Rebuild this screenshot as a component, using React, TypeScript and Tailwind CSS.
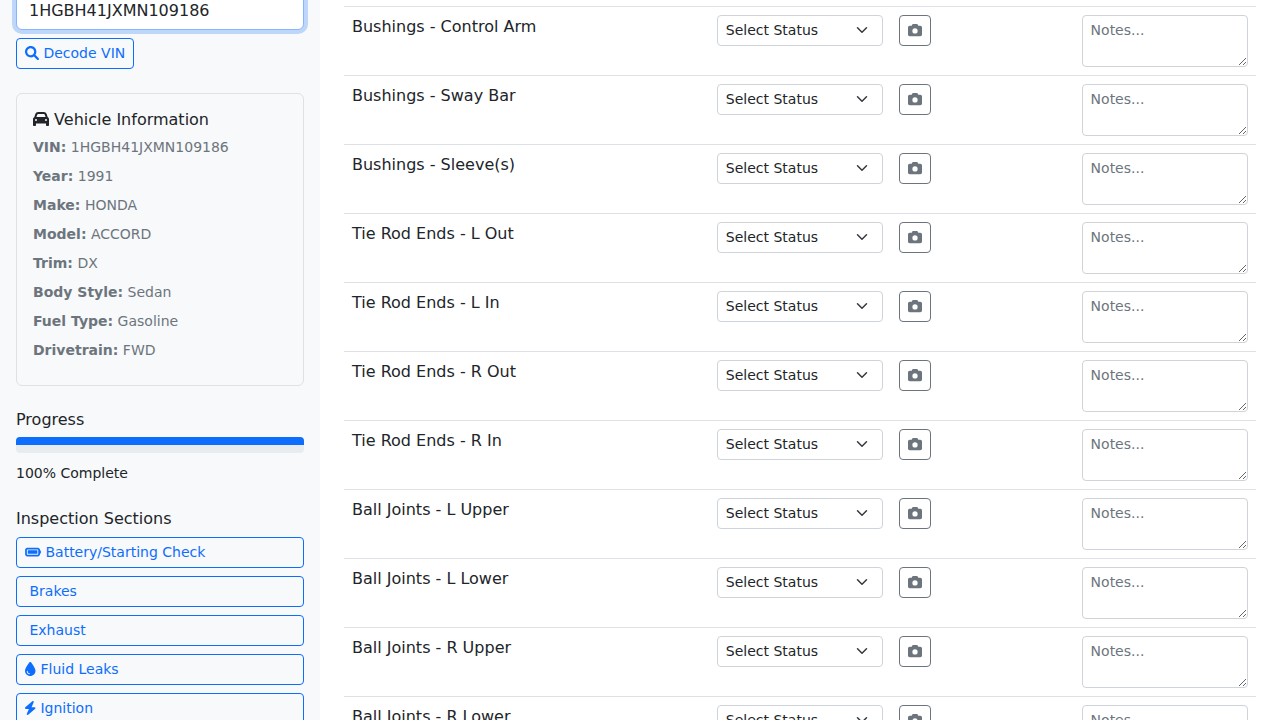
import { FaBatteryFull, FaCamera, FaCar } from 'react-icons/fa6';
import type { ReactNode } from 'react';

const vehicle: [string, string][] = [
  ['VIN', '1HGBH41JXMN109186'],
  ['Year', '1991'],
  ['Make', 'HONDA'],
  ['Model', 'ACCORD'],
  ['Trim', 'DX'],
  ['Body Style', 'Sedan'],
  ['Fuel Type', 'Gasoline'],
  ['Drivetrain', 'FWD'],
];

const items = [
  'Bushings - Control Arm',
  'Bushings - Sway Bar',
  'Bushings - Sleeve(s)',
  'Tie Rod Ends - L Out',
  'Tie Rod Ends - L In',
  'Tie Rod Ends - R Out',
  'Tie Rod Ends - R In',
  'Ball Joints - L Upper',
  'Ball Joints - L Lower',
  'Ball Joints - R Upper',
  'Ball Joints - R Lower',
];

function SearchIcon() {
  return (
    <svg viewBox="0 0 512 512" fill="currentColor" className="inline-block h-[14px] w-[14px] align-[-0.125em]">
      <path d="M500.3 443.7l-119.7-119.7c27.22-40.41 40.65-90.9 33.46-144.7C401.8 87.79 326.8 13.32 235.2 1.723C99.01-15.51-15.51 99.01 1.724 235.2c11.6 91.64 86.08 166.7 177.6 178.9c53.8 7.189 104.3-6.236 144.7-33.46l119.7 119.7c15.62 15.62 40.95 15.62 56.57 0C515.9 484.7 515.9 459.3 500.3 443.7zM79.1 208c0-70.58 57.42-128 128-128s128 57.42 128 128c0 70.58-57.42 128-128 128S79.1 278.6 79.1 208z" />
    </svg>
  );
}

function DropletIcon() {
  return (
    <svg viewBox="0 0 384 512" preserveAspectRatio="xMinYMid meet" fill="currentColor" className="inline-block h-[14px] w-[11px] align-[-0.19em]">
      <path d="M192 512C86 512 0 426 0 320C0 228.8 130.2 57.7 166.6 11.7C172.6 4.2 181.5 0 191.1 0h1.8c9.6 0 18.5 4.2 24.5 11.7C253.8 57.7 384 228.8 384 320c0 106-86 192-192 192zM96 336c0-8.800-7.200-16-16-16s-16 7.200-16 16c0 61.900 50.100 112 112 112c8.800 0 16-7.200 16-16s-7.200-16-16-16c-44.200 0-80-35.800-80-80z" />
    </svg>
  );
}

function BoltIcon() {
  return (
    <svg viewBox="0 0 384 512" preserveAspectRatio="xMinYMid meet" fill="currentColor" className="inline-block h-[14px] w-[11px] align-[-0.19em]">
      <path d="M240.5 224H352C365.3 224 377.3 232.3 381.1 244.7C386.6 257.2 383.1 271.3 373.1 280.1L117.1 504.1C105.8 513.9 89.27 514.7 77.19 505.9C65.1 497.1 60.7 481.1 66.59 467.4L143.5 288H31.1C18.67 288 6.733 279.7 2.044 267.3C-2.645 254.8 .8944 240.7 10.93 231.9L266.9 7.918C278.2-1.92 294.7-2.669 306.8 6.114C318.9 14.9 323.3 30.87 317.4 44.61L240.5 224z" />
    </svg>
  );
}

const sections: { label: string; icon?: ReactNode }[] = [
  {
    label: 'Battery/Starting Check',
    icon: <FaBatteryFull className="inline-block h-[14px] w-4 align-[-0.19em]" />,
  },
  { label: 'Brakes' },
  { label: 'Exhaust' },
  { label: 'Fluid Leaks', icon: <DropletIcon /> },
  { label: 'Ignition', icon: <BoltIcon /> },
];

function Sidebar() {
  return (
    <aside className="h-full w-80 shrink-0 overflow-hidden bg-[#f8f9fa] px-4">
      <input
        type="text"
        defaultValue="1HGBH41JXMN109186"
        className="-mt-2 block h-[38px] w-full rounded-md border border-[#86b7fe] bg-white px-3 pt-[5px] pb-[7px] text-base leading-6 shadow-[0_0_0_4px_rgba(13,110,253,0.25)] outline-none"
      />
      <button className="mt-2 block h-[31px] rounded border border-[#0d6efd] px-2 py-1 text-sm leading-[21px] text-[#0d6efd]">
        <SearchIcon /> Decode VIN
      </button>

      <section className="mt-6 rounded-md border border-[#dee2e6] p-4">
        <h6 className="mb-2 text-base leading-[19.2px]">
          <FaCar className="inline-block h-4 w-4 align-[-0.125em]" /> Vehicle Information
        </h6>
        {vehicle.map(([label, value]) => (
          <p key={label} className="mb-2 text-sm leading-[21px] text-[#6c757d]">
            <strong className="font-bold">{label}:</strong> {value}
          </p>
        ))}
      </section>

      <section className="mt-6">
        <h6 className="mb-2 text-base leading-[19.2px]">Progress</h6>
        <div className="h-4 overflow-hidden rounded bg-[#e9ecef]">
          <div className="h-2 w-full bg-[#0d6efd]" />
        </div>
        <div className="mt-2 text-base leading-6">
          <span className="text-sm leading-[21px]">100% Complete</span>
        </div>
      </section>

      <section className="mt-6">
        <h6 className="mb-2 text-base leading-[19.2px]">Inspection Sections</h6>
        <div className="flex flex-col gap-2">
          {sections.map(({ label, icon }) => (
            <button
              key={label}
              className="h-[31px] w-full rounded border border-[#0d6efd] px-2 py-1 text-left text-sm leading-[21px] whitespace-pre text-[#0d6efd]"
            >
              {icon} {label}
            </button>
          ))}
        </div>
      </section>
    </aside>
  );
}

function InspectionRow({ name }: { name: string }) {
  return (
    <div className="grid h-[69px] shrink-0 grid-cols-[2fr_1fr_1fr_1fr] border-b border-[#dee2e6]">
      <div className="p-2 text-base leading-6">{name}</div>
      <div className="p-2">
        <div className="grid">
          <select className="col-start-1 row-start-1 h-[31px] w-full appearance-none rounded border border-[#ced4da] bg-white py-1 pr-9 pl-2 text-sm leading-[21px]">
            <option>Select Status</option>
            <option>Pass</option>
            <option>Fail</option>
          </select>
          <svg
            viewBox="0 0 16 16"
            className="pointer-events-none col-start-1 row-start-1 mr-[13px] mb-[2px] h-3 w-4 self-center justify-self-end"
            fill="none"
            stroke="#343a40"
            strokeWidth="2"
            strokeLinecap="round"
            strokeLinejoin="round"
          >
            <path d="m2 5 6 6 6-6" />
          </svg>
        </div>
      </div>
      <div className="p-2">
        <button className="block h-[31px] rounded border border-[#6c757d] px-2 py-1 text-sm leading-[21px] text-[#6c757d]">
          <FaCamera className="inline-block h-[14px] w-[14px] align-[-0.125em]" />
        </button>
      </div>
      <div className="p-2">
        <textarea
          placeholder="Notes..."
          className="block h-[52px] w-full resize-y rounded border border-[#ced4da] bg-white px-2 py-1 text-sm leading-[21px] placeholder:text-[#6c757d]"
        />
      </div>
    </div>
  );
}

export default function App() {
  return (
    <div className="flex h-screen overflow-hidden bg-white font-['DejaVu_Sans',sans-serif] text-[#212529]">
      <Sidebar />
      <main className="flex min-w-0 flex-1 flex-col overflow-hidden px-6 pt-[6px]">
        <div className="shrink-0 border-t border-[#dee2e6]">
          {items.map((name) => (
            <InspectionRow key={name} name={name} />
          ))}
        </div>
      </main>
    </div>
  );
}
